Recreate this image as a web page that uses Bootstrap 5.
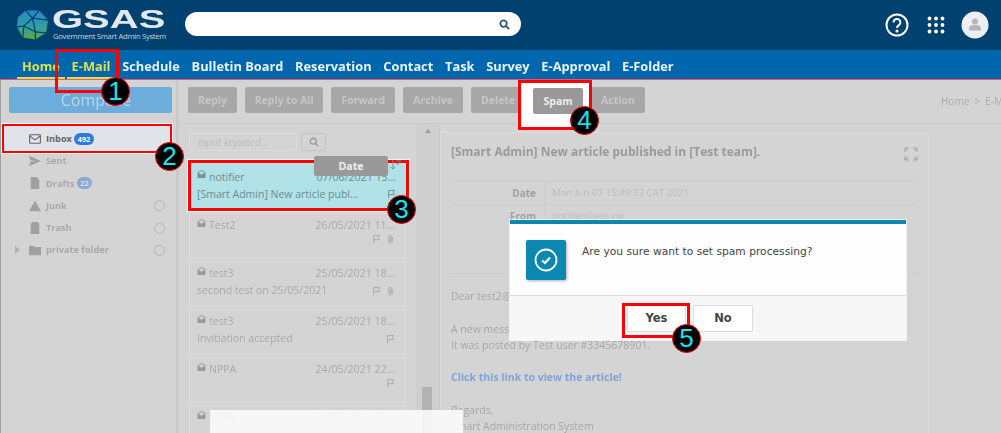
<!DOCTYPE html>
<html lang="en">
<head>
<meta charset="utf-8">
<title>GSAS</title>
<link href="https://cdn.jsdelivr.net/npm/bootstrap@5.3.0/dist/css/bootstrap.min.css" rel="stylesheet">
<style>
html,body{height:433px;overflow:hidden}
body{background:#d4d4d4;font-family:"Open Sans","Liberation Sans",sans-serif;position:relative;width:1001px}
.topbar{height:50px;background:#00416f;padding:0 12px 0 16px}
.logo-word{width:112px;color:#e3e8ee;line-height:1;margin-left:3px;margin-right:1px;flex:none}
.logo-gs{display:block;font:700 25px/18px "Liberation Sans",sans-serif;transform:scaleX(1.6);transform-origin:left;width:72px}
.logo-tag{display:block;font-size:7.7px;line-height:10px;margin-top:3px;white-space:nowrap;letter-spacing:-.3px;color:#c8d3de;padding-left:1px}
.searchbox{width:336px;height:24px;background:#fff;border-radius:12px;margin-left:20px;padding-right:11px;margin-bottom:2px}
.top-icons{gap:16px}
.top-icons .helpmark{margin-right:2px}
.mainnav{height:30px;background:#0067ae;border-bottom:1px solid #e45c6c;padding-left:17px}
.mainnav a{display:block;height:29px;line-height:32px;padding:0 5px;margin-right:1.75px;font-weight:700;font-size:12.8px;color:#fff;text-decoration:none;opacity:.92;white-space:nowrap}
.mainnav a.on{color:#f5ea3c;border-bottom:2px solid #f5ea3c}
.workarea{height:353px}
.sidepane{width:176px;flex:none;border-right:3px solid #c9c9c9;box-sizing:content-box;padding-top:7px;box-shadow:inset 1px 0 #a0a0a0}
.composebtn{display:block;width:163px;height:26px;margin-left:9px;background:#6daddb;border:0;border-radius:2px;color:#bcd4e6;font-size:16px;line-height:26px;padding:0 0 0 11px}
.foldertree{margin-top:11px}
.folder-row{height:22.3px;padding-left:29px;font-size:9.2px;font-weight:700;color:#a8a8a8;gap:5px}
.folder-row .ic{width:12px;height:12px;fill:#a0a0a0;flex:none}
.folder-row.inbox-row{height:29px;margin:0 0 -3px 2px;width:170px;background:#e0e3e8;border:2px solid #f00;outline:1px solid #fff;color:#666;padding-left:25px;position:relative;z-index:1}
.folder-row.inbox-row .ic{fill:none;stroke:#666;stroke-width:1.3}
.mailcount{background:#2d7be0;font-size:7.5px;font-weight:700;padding:2px 3.5px;line-height:8px;margin-left:-3px}
.mailcount.dim{background:#8aa9d2;color:#d4dee9}
.ringmark{width:11px;height:11px;border:1px solid #b4b4b4;border-radius:50%;margin:0 11px 0 auto}
.caretmark{position:absolute;width:0;height:0;border-left:5px solid #b0b0b0;border-top:4px solid transparent;border-bottom:4px solid transparent;margin-left:-14px}
.contentpane{min-width:0}
.tools{height:44px;padding:7px 0 0 9px;gap:8px;border-bottom:1px solid #cbcbcb}
.tools .btn{height:26px;padding:0 10px;background:#a8a8a8;border:0;border-radius:2px;color:#c6c6c6;font-size:10.5px;font-weight:700;line-height:26px;white-space:nowrap}
.tools .btn.spam-lit{background:#999;color:#eee;padding:0;width:50px}
.tools .btn.tight{padding:0 9.7px}
.spot-wrap{position:relative;z-index:2}
.spot-wrap::before{content:"";position:absolute;inset:-7px -9px -7px -15px;background:#fff;border:3px solid #f00;z-index:-1}
.crumbs{margin-left:auto;font-size:10px;color:#a9a9a9;white-space:nowrap;padding-top:7px;width:60px;overflow:hidden;flex:none}
.splitrow{height:309px;overflow:hidden}
.listpane{width:239px;flex:none;padding:9px 0 0 10px;border-right:1px solid #c8c8c8}
.kw-input{width:108px;height:18px;border:1px solid #dcdcdc;font-size:10px;font-style:italic;color:#bdbdbd;padding:0 8px;line-height:16px;border-radius:2px}
.kw-btn{width:25px;height:18px;border:1px solid #c4c4c4;margin-left:4px;border-radius:2px}
.mailitem{position:relative;width:216px;height:46px;margin-bottom:2px;border:1px solid #dcdcdc;padding:0 9px 0 7px;color:#a8a8a8;font-size:10.5px;line-height:17px}
.mailitem.picked{height:51px;width:221px;margin:9px 0 2px -1px;background:#b1e2e7;border:3px solid #f00;outline:1px solid #fff;color:#6d8b90;padding:2.5px 10px 0 6px;z-index:1}
.mailhead{height:20px;padding-top:3px}
.mailname{margin-left:3px}
.maildate{margin-left:auto;font-size:10.6px}
.subjline{white-space:nowrap}
.mini{width:9px;height:10px;fill:none;stroke:currentColor;stroke-width:1.3;margin-left:5px}
.envopen{width:9px;height:10px;fill:#999;margin-bottom:6px}
.picked .envopen{fill:#7b8e92}
.sortglyph{position:absolute;left:390px;top:160px;z-index:4}
.railbox{width:22px;flex:none;padding:5px 0 0 4px;background:#cfcfcf;border-right:1px solid #cacaca}
.railtop{width:0;height:0;margin-left:3px;border-bottom:4px solid #9b9b9b;border-left:3px solid transparent;border-right:3px solid transparent}
.railthumb{width:10px;height:48px;margin-top:254px;background:#b2b2b2}
.readpane{width:489px;padding-top:8px}
.readcard{border:1px solid #dcdcdc;height:320px;padding:10px 10px;color:#a6a6a6;font-size:10.5px}
.readtitle{font-size:12px;font-weight:700;color:#9a9a9a;height:38px;line-height:18px}
.metarow{height:23px;border-top:1px solid #cdcdcd;line-height:22px;font-size:9.7px;color:#bdbdbd}
.metarow b{display:block;width:94px;text-align:right;padding-right:8px;margin-right:7px;color:#a0a0a0;border-right:1px solid #cdcdcd;flex:none;height:22px;font-size:10px}
.msgbody{margin-top:46px;line-height:16.3px;border-top:1px solid #cdcdcd;padding-top:14px}
.msgbody p{margin:0 0 16.3px}
.msgbody .linkish{font-weight:700;color:#7fa3d9}
.alertbox{position:absolute;left:510px;top:220px;width:396px;height:120px;background:#fdfdfd;border-top:4px solid #0a88b2;outline:1px solid rgba(255,255,255,.7);z-index:3;font-family:"DejaVu Sans","Liberation Sans",sans-serif}
.alertmain{height:72px;padding:16px;border-bottom:1px solid #ddd;font-size:10.7px;color:#444}
.alerticon{width:40px;height:40px;background:#0a88b2;border-radius:2px;box-shadow:1px 1px 3px rgba(0,0,0,.3);margin-right:16px;flex:none}
.alertfoot{height:44px;background:#f7f7f7;padding-top:9px;padding-left:117px;gap:7px}
.alertfoot .btn{width:60px;height:27px;padding:0;background:#fff;border:1px solid #ddd;border-radius:1px;font-size:11.5px;font-weight:700;color:#444;line-height:25px}
.alertfoot .btn.yes-btn{width:59px}
.yes-frame{position:absolute;left:622px;top:303px;width:68px;height:35px;border:3px solid #f00;z-index:4}
.email-frame{position:absolute;left:55px;top:49px;width:64px;height:44px;border:3px solid #f00;z-index:4}
.stepdot{position:absolute;width:29px;height:29px;border-radius:50%;background:#000;border:1px solid #f00;color:#19e3ee;font:400 26px/27px "Liberation Sans",sans-serif;text-align:center;z-index:5}
.datetip{position:absolute;left:314px;top:156px;width:74px;height:20px;background:#999;color:#eee;border-radius:2px;font-size:10.5px;font-weight:700;line-height:20px;text-align:center;z-index:4}
.paperpatch{position:absolute;left:210px;top:410px;width:253px;height:23px;background:rgba(251,251,251,.9);z-index:4}
.soften{filter:blur(.45px)}
</style>
</head>
<body>
<svg width="0" height="0" class="position-absolute">
  <defs>
    <linearGradient id="orb" x1="0" y1="0" x2="0" y2="1"><stop offset="0" stop-color="#2b86c5"/><stop offset=".55" stop-color="#2f9fa8"/><stop offset="1" stop-color="#5cab3e"/></linearGradient>
    <symbol id="env-open" viewBox="0 0 16 16"><path d="M8 1 1 5.5V15h14V5.5L8 1zM2.6 6 8 2.6 13.4 6 8 9.4 2.6 6z"/></symbol>
    <symbol id="flagmark" viewBox="0 0 12 14"><path d="M2 13V2h8L8.5 5 10 8H2"/></symbol>
    <symbol id="clipmark" viewBox="0 0 12 14"><path d="M8.5 4v6a2.5 2.5 0 0 1-5 0V3.5a1.7 1.7 0 0 1 3.4 0V9.5a.8.8 0 0 1-1.6 0V4.5"/></symbol>
  </defs>
</svg>

<header class="topbar d-flex align-items-center">
  <svg width="33" height="32" viewBox="0 0 34 32" class="flex-shrink-0">
    <path d="M10 1 24 1 33 11 31 24 20 31 7 29 1 18 2 8Z" fill="url(#orb)"/>
    <path d="M10 1 17 9 24 1M17 9 33 11M17 9 8 17 1 18M8 17 7 29M8 17 20 23 20 31M20 23 31 24M20 23 17 9" stroke="#00416f" stroke-width="1.3" fill="none"/>
  </svg>
  <div class="logo-word">
    <span class="logo-gs">GSAS</span>
    <span class="logo-tag">Government Smart Admin System</span>
  </div>
  <div class="searchbox d-flex align-items-center justify-content-end">
    <svg width="11" height="11" viewBox="0 0 12 12" fill="none" stroke="#33546f" stroke-width="2"><circle cx="5" cy="5" r="3.5"/><path d="M8 8l3 3"/></svg>
  </div>
  <div class="top-icons d-flex align-items-center ms-auto">
    <svg class="helpmark" width="24" height="24" viewBox="0 0 24 24" fill="none" stroke="#fff" stroke-width="2"><circle cx="12" cy="12" r="10.5"/><path d="M8.6 9.4a3.4 3.4 0 1 1 5.3 2.8c-1.2.8-1.9 1.4-1.9 2.9"/><circle cx="12" cy="18" r=".6"/></svg>
    <svg width="18" height="18" viewBox="0 0 18 18" fill="#fff"><circle cx="2.5" cy="2.5" r="1.9"/><circle cx="9" cy="2.5" r="1.9"/><circle cx="15.5" cy="2.5" r="1.9"/><circle cx="2.5" cy="9" r="1.9"/><circle cx="9" cy="9" r="1.9"/><circle cx="15.5" cy="9" r="1.9"/><circle cx="2.5" cy="15.5" r="1.9"/><circle cx="9" cy="15.5" r="1.9"/><circle cx="15.5" cy="15.5" r="1.9"/></svg>
    <svg width="28" height="28" viewBox="0 0 28 28"><circle cx="14" cy="14" r="13.5" fill="#edeff2"/><circle cx="14" cy="10.5" r="3" fill="#b5b5b5"/><path d="M8 19.5v-2c0-2 2-3.5 3.5-3.5h5c1.500 0 3.500 1.500 3.500 3.500v2z" fill="#b5b5b5"/></svg>
  </div>
</header>

<nav class="mainnav d-flex">
  <a class="on" href="#">Home</a><a class="on" href="#">E-Mail</a><a href="#">Schedule</a><a href="#">Bulletin Board</a><a href="#">Reservation</a><a href="#">Contact</a><a href="#">Task</a><a href="#">Survey</a><a href="#">E-Approval</a><a href="#">E-Folder</a>
</nav>

<div class="workarea d-flex">
  <aside class="sidepane">
    <button class="composebtn soften">Compose</button>
    <div class="foldertree">
      <div class="folder-row inbox-row d-flex align-items-center">
        <svg class="ic" viewBox="0 0 14 12"><rect x=".7" y="1" width="12.6" height="10" rx="1"/><path d="M1 2.5 7 7l6-4.5"/></svg>
        <span>Inbox</span><span class="badge rounded-pill mailcount">492</span>
      </div>
      <div class="soften">
      <div class="folder-row d-flex align-items-center"><svg class="ic" viewBox="0 0 14 12"><path d="M0 0 14 6 0 12l1.5-5L8 6 1.5 5z"/></svg><span>Sent</span></div>
      <div class="folder-row d-flex align-items-center"><svg class="ic" viewBox="0 0 12 14"><path d="M1 0h7l3 3.5V14H1z"/></svg><span>Drafts</span><span class="badge rounded-pill mailcount dim">22</span></div>
      <div class="folder-row d-flex align-items-center"><svg class="ic" viewBox="0 0 14 12"><path d="M7 0 14 12H0z"/></svg><span>Junk</span><span class="ringmark"></span></div>
      <div class="folder-row d-flex align-items-center"><svg class="ic" viewBox="0 0 12 14"><path d="M2.5 0h7v1.500H11v12.500H1V1.500h1.500z"/></svg><span>Trash</span><span class="ringmark"></span></div>
      <div class="folder-row d-flex align-items-center"><span class="caretmark"></span><svg class="ic" viewBox="0 0 14 12"><path d="M0 1h5l1.500 1.500H14V12H0z"/></svg><span>private folder</span><span class="ringmark"></span></div>
      </div>
    </div>
  </aside>

  <main class="contentpane flex-grow-1">
    <div class="tools d-flex">
      <button class="btn soften">Reply</button>
      <button class="btn tight soften">Reply to All</button>
      <button class="btn soften">Forward</button>
      <button class="btn soften">Archive</button>
      <button class="btn soften">Delete</button>
      <span class="spot-wrap"><button class="btn spam-lit">Spam</button></span>
      <button class="btn soften">Action</button>
      <div class="crumbs soften">Home &nbsp;&gt;&nbsp; E-Mail</div>
    </div>
    <div class="splitrow d-flex">
      <section class="listpane">
        <div class="d-flex soften">
          <div class="kw-input">input keyword...</div>
          <div class="kw-btn d-flex align-items-center justify-content-center"><svg width="10" height="10" viewBox="0 0 12 12" fill="none" stroke="#999" stroke-width="1.6"><circle cx="5" cy="5" r="3.5"/><path d="M8 8l3 3"/></svg></div>
        </div>
        <div class="mailitem picked">
          <div class="mailhead d-flex align-items-center"><svg class="envopen"><use href="#env-open"/></svg><span class="mailname">notifier</span><span class="maildate">07/06/2021 15...</span></div>
          <div class="subjline d-flex align-items-center"><span>[Smart Admin] New article publ...</span><svg class="mini ms-auto"><use href="#flagmark"/></svg></div>
        </div>
        <div class="soften">
        <div class="mailitem">
          <div class="mailhead d-flex align-items-center"><svg class="envopen"><use href="#env-open"/></svg><span class="mailname">Test2</span><span class="maildate">26/05/2021 11...</span></div>
          <div class="subjline d-flex align-items-center justify-content-end"><svg class="mini"><use href="#flagmark"/></svg><svg class="mini"><use href="#clipmark"/></svg></div>
        </div>
        <div class="mailitem">
          <div class="mailhead d-flex align-items-center"><svg class="envopen"><use href="#env-open"/></svg><span class="mailname">test3</span><span class="maildate">25/05/2021 18...</span></div>
          <div class="subjline d-flex align-items-center"><span>second test on 25/05/2021</span><svg class="mini ms-auto"><use href="#flagmark"/></svg><svg class="mini"><use href="#clipmark"/></svg></div>
        </div>
        <div class="mailitem">
          <div class="mailhead d-flex align-items-center"><svg class="envopen"><use href="#env-open"/></svg><span class="mailname">test3</span><span class="maildate">25/05/2021 18...</span></div>
          <div class="subjline d-flex align-items-center"><span>Invitiation accepted</span><svg class="mini ms-auto"><use href="#flagmark"/></svg></div>
        </div>
        <div class="mailitem">
          <div class="mailhead d-flex align-items-center"><svg class="envopen"><use href="#env-open"/></svg><span class="mailname">NPPA</span><span class="maildate">24/05/2021 22...</span></div>
          <div class="subjline d-flex align-items-center justify-content-end"><svg class="mini"><use href="#flagmark"/></svg></div>
        </div>
        <div class="mailitem">
          <div class="mailhead d-flex align-items-center"><svg class="envopen"><use href="#env-open"/></svg><span class="mailname">NPPA</span><span class="maildate">24/05/2021 22...</span></div>
        </div>
        </div>
      </section>
      <div class="railbox"><div class="railtop"></div><div class="railthumb"></div></div>
      <article class="readpane soften">
        <div class="readcard">
          <div class="readtitle d-flex justify-content-between">
            <span>[Smart Admin] New article published in [Test team].</span>
            <svg width="14" height="14" viewBox="0 0 14 14" fill="none" stroke="#a0a0a0" class="mt-1"><path d="M1 5V1h4M1 1l3 3M9 1h4v4M13 1l-3 3M1 9v4h4M1 13l3-3M13 9v4H9M13 13l-3-3"/></svg>
          </div>
          <div class="metarow d-flex"><b>Date</b><span>Mon Jun 07 15:49:33 CAT 2021</span></div>
          <div class="metarow d-flex"><b>From</b><span>notifier@aos.rw</span></div>
          <div class="msgbody">
            <p>Dear test2@aos.rw</p>
            <p>A new message has been published.<br>It was posted by Test user #3345678901.</p>
            <p class="linkish">Click this link to view the article!</p>
            <p>Regards,<br>Smart Administration System</p>
          </div>
        </div>
      </article>
    </div>
  </main>
</div>

<svg class="sortglyph" width="11" height="10" viewBox="0 0 11 10" stroke="#7f8f92" fill="none"><path d="M3 0v9M1 7l2 2 2-2M6 1h5M6 4h3"/></svg>
<div class="datetip">Date</div>
<div class="paperpatch"></div>
<div class="email-frame"></div>
<div class="yes-frame"></div>

<div class="alertbox">
  <div class="alertmain d-flex">
    <div class="alerticon d-flex align-items-center justify-content-center">
      <svg width="24" height="24" viewBox="0 0 24 24" fill="none" stroke="#fff" stroke-width="1.8"><circle cx="12" cy="12" r="10.5"/><path d="M8 12.5 11 15l5-5.5" stroke-width="2"/></svg>
    </div>
    <div class="pt-1">Are you sure want to set spam processing?</div>
  </div>
  <div class="alertfoot d-flex">
    <button class="btn yes-btn">Yes</button>
    <button class="btn">No</button>
  </div>
</div>

<div class="stepdot" style="left:101px;top:77px">1</div>
<div class="stepdot" style="left:155px;top:142px">2</div>
<div class="stepdot" style="left:387px;top:195px">3</div>
<div class="stepdot" style="left:570px;top:106px">4</div>
<div class="stepdot" style="left:672px;top:324px">5</div>

<script src="https://cdn.jsdelivr.net/npm/bootstrap@5.3.0/dist/js/bootstrap.bundle.min.js"></script>
</body>
</html>
